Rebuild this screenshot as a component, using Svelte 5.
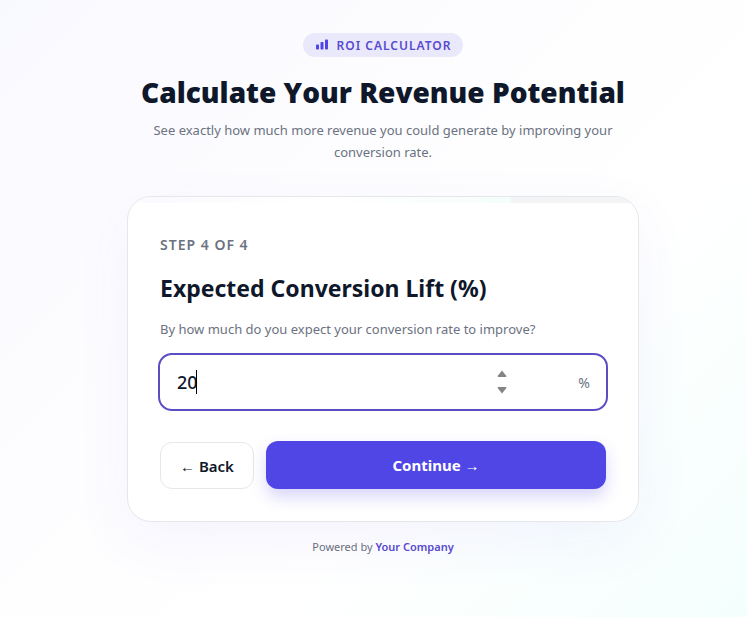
<script>
  let step = 4
  const totalSteps = 4
  const fields = { lift: 20 }

  // the bar shows completed steps only
  $: progress = ((step - 1) / totalSteps) * 100

  function nudge(amount) {
    fields.lift = Number(fields.lift || 0) + amount
  }

  function back() {
    if (step > 1) step -= 1
  }

  function next() {
    if (step < totalSteps) step += 1
  }
</script>

<main class="page">
  <div class="calculator">
    <header class="intro">
      <span class="badge">
        <svg viewBox="0 0 12 12" width="12" height="12" aria-hidden="true">
          <rect x="0" y="5.5" width="3" height="5" rx=".8" />
          <rect x="4.5" y="3" width="3" height="7.5" rx=".8" />
          <rect x="9" y=".5" width="3" height="10" rx=".8" />
        </svg>
        ROI Calculator
      </span>
      <h1>Calculate Your Revenue Potential</h1>
      <p>See exactly how much more revenue you could generate by improving your conversion rate.</p>
    </header>

    <form class="card" on:submit|preventDefault={next}>
      <div class="progress">
        <div class="progress-fill" style="width: {progress}%"></div>
      </div>

      <div class="step">Step {step} of {totalSteps}</div>
      <h2><label for="lift">Expected Conversion Lift (%)</label></h2>
      <p class="hint" id="lift-hint">By how much do you expect your conversion rate to improve?</p>

      <div class="field">
        <div class="value">
          <input id="lift" type="number" aria-describedby="lift-hint" bind:value={fields.lift} />
          <span class="caret" aria-hidden="true"></span>
        </div>
        <div class="spinner">
          <button type="button" aria-label="Increase" on:click={() => nudge(1)}>
            <svg viewBox="0 0 10 8" width="10" height="8"><path d="M5 .5 L9.4 6 Q9.6 7 8.6 7 H1.4 Q.4 7 .6 6 Z" /></svg>
          </button>
          <button type="button" aria-label="Decrease" on:click={() => nudge(-1)}>
            <svg viewBox="0 0 10 8" width="10" height="8"><path d="M5 7.5 L9.4 2 Q9.6 1 8.6 1 H1.4 Q.4 1 .6 2 Z" /></svg>
          </button>
        </div>
        <span class="unit">%</span>
      </div>

      <div class="actions">
        <button type="button" class="back" on:click={back}>← Back</button>
        <button type="submit" class="continue">Continue →</button>
      </div>
    </form>

    <footer>Powered by <a href="#company">Your Company</a></footer>
  </div>
</main>

<style>
  :global(body) {
    margin: 0;
  }

  .page {
    box-sizing: border-box;
    min-height: 100vh;
    padding: 33px 16px 32px 35px;
    background: linear-gradient(135deg, #f8f8ff 0%, #fdfdff 35%, #fff 65%, #f4fffd 100%);
    color: #0f172a;
    font-family: 'Segoe UI', 'Noto Sans', 'Open Sans', sans-serif;
  }

  .calculator {
    max-width: 512px;
    margin: 0 auto;
  }

  .intro {
    display: flex;
    flex-direction: column;
    align-items: center;
    text-align: center;
  }

  .badge {
    display: inline-flex;
    align-items: center;
    gap: 9px;
    height: 24px;
    padding: 0 12px 0 13px;
    border-radius: 999px;
    background: #eae8fb;
    color: #574bd0;
    font-size: 12px;
    font-weight: 600;
    letter-spacing: 1px;
    text-transform: uppercase;
  }

  .badge svg {
    fill: #4f46e5;
  }

  h1 {
    margin: 16px 0 8px;
    font-family: 'Segoe UI', 'Open Sans', sans-serif;
    font-size: 28px;
    font-weight: 800;
    line-height: 38px;
  }

  .intro p {
    margin: 0;
    padding: 0 16px;
    color: #6b7280;
    font-size: 13px;
    line-height: 22px;
  }

  .card {
    position: relative;
    overflow: hidden;
    margin-top: 33px;
    padding: 38px 32px 32px;
    border: 1px solid #e5e7eb;
    border-radius: 24px;
    background: #fff;
    box-shadow: 0 20px 60px rgba(79, 70, 229, 0.06);
  }

  .progress {
    position: absolute;
    top: 0;
    left: 0;
    right: 0;
    height: 6px;
    background: #f3f4f6;
  }

  .progress-fill {
    height: 100%;
    background: linear-gradient(90deg, #fafaff, #fff 50%, #f5fefb);
  }

  .step {
    color: #6b7280;
    font-size: 14px;
    font-weight: 600;
    letter-spacing: 1px;
    line-height: 20px;
    text-transform: uppercase;
  }

  h2 {
    margin: 17px 0 15px;
    font-size: 23px;
    font-weight: 700;
    line-height: 32px;
  }

  .hint {
    margin: 0;
    color: #6b7280;
    font-size: 13px;
    line-height: 20px;
  }

  .field {
    display: flex;
    align-items: center;
    height: 54px;
    margin: 14px -2px 30px;
    padding: 0 16px 0 17px;
    border: 2px solid #5b4ec4;
    border-radius: 14px;
  }

  .value {
    position: relative;
    flex: 1;
  }

  input {
    display: block;
    width: 100%;
    padding: 0;
    border: 0;
    outline: 0;
    background: none;
    color: #0f172a;
    font: 500 18px/24px 'Segoe UI', 'Noto Sans', 'Open Sans', sans-serif;
    appearance: textfield;
  }

  input::-webkit-inner-spin-button {
    appearance: none;
  }

  .caret {
    position: absolute;
    top: 0;
    left: 19px;
    width: 1px;
    height: 24px;
    background: #000;
  }

  .spinner {
    display: flex;
    flex-direction: column;
    gap: 8px;
    margin-right: 71px;
  }

  .spinner button {
    display: flex;
    padding: 0;
    border: 0;
    background: none;
  }

  .spinner svg {
    fill: #858585;
  }

  .unit {
    color: #6b7280;
    font-size: 14px;
  }

  .actions {
    display: flex;
    align-items: flex-end;
    gap: 12px;
  }

  .actions button {
    border-radius: 12px;
    font-family: inherit;
    font-size: 15px;
    cursor: pointer;
  }

  .back {
    height: 47px;
    padding: 0 19px;
    border: 1px solid #e5e7eb;
    background: #fff;
    color: #0f172a;
    font-weight: 600;
  }

  .continue {
    flex: 1;
    height: 48px;
    border: 0;
    background: #4f46e5;
    color: #fff;
    font-weight: 700;
    box-shadow: 0 8px 16px rgba(79, 70, 229, 0.22);
  }

  footer {
    margin-top: 16px;
    color: #6b7280;
    font-size: 11px;
    line-height: 18px;
    text-align: center;
  }

  footer a {
    color: #574bd0;
    font-weight: 600;
    text-decoration: none;
  }
</style>
